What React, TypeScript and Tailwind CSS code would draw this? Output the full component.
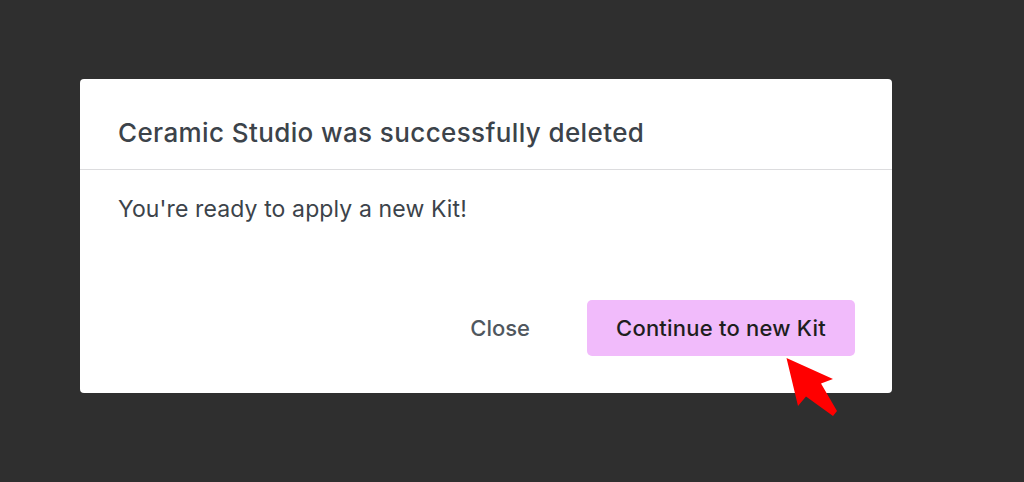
import React from "react";

export default function App() {
  return (
    <div className="w-[1024px] h-[482px] bg-[#2f2f2f] pt-[79px] pl-[80px] relative overflow-hidden" style={{ fontFamily: "Inter, 'Noto Sans', sans-serif" }}>
      <div className="w-[812px] h-[314px] bg-white rounded-[4px] flex flex-col">
        <div className="h-[91px] border-b border-[#dcdcde] flex items-center px-[38px] pt-[18px]">
          <h1 className="text-[26px] font-medium tracking-[0.015em] text-[#3c434a] leading-none">Ceramic Studio was successfully deleted</h1>
        </div>
        <div className="px-[38px] pt-[25px] text-[23px] tracking-[0.005em] text-[#3c434a] leading-[28px]">You're ready to apply a new Kit!</div>
        <div className="mt-auto mb-[37px] mr-[37px] flex justify-end items-center gap-[57px]">
          <button className="text-[22px] font-medium text-[#50575e]">Close</button>
          <button className="w-[268px] h-[56px] rounded-[5px] bg-[#f1bbfb] text-[22px] font-medium tracking-[0.01em] text-[#1e1e1e]">Continue to new Kit</button>
        </div>
      </div>
      <svg className="absolute left-0 top-0" width="1024" height="482" viewBox="0 0 1024 482">
        <polygon points="786.5,358 833,379 821,383.5 837,411 833,416 806,396.5 798,406" fill="#ff0000" />
      </svg>
    </div>
  );
}
